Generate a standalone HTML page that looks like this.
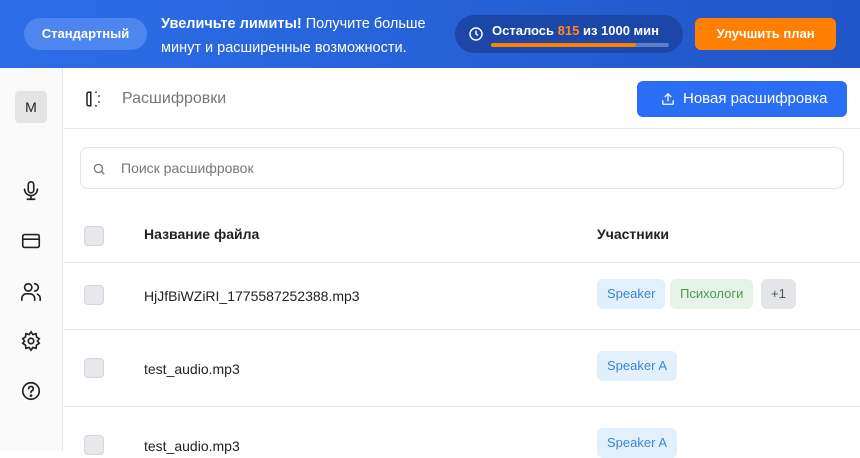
<!DOCTYPE html>
<html><head><meta charset="utf-8"><style>
*{box-sizing:border-box;margin:0;padding:0}
body{width:860px;height:451px;overflow:hidden;font-family:"Liberation Sans",sans-serif;background:#fff;position:relative;color:#222}
.banner{position:absolute;left:0;top:0;width:860px;height:68px;background:linear-gradient(90deg,#2c6ee8,#2056c8)}
.pill{position:absolute;left:24px;top:18px;width:123px;height:32px;border-radius:16px;background:#4d86ef;color:#fff;font-weight:bold;font-size:13px;text-align:center;line-height:32px}
.btxt{position:absolute;left:161px;top:12px;color:#fff;font-size:14.5px;line-height:24px}
.usage{position:absolute;left:455px;top:15px;width:228px;height:38px;border-radius:19px;background:#1c47a8}
.usage .t{position:absolute;left:37px;top:8px;color:#fff;font-size:13px;font-weight:bold}
.bar{position:absolute;left:36px;top:28px;width:178px;height:4px;border-radius:2px;background:#5d7fc4}
.bar i{display:block;width:145px;height:4px;border-radius:2px;background:#ff7f00}
.up{position:absolute;left:695px;top:18px;width:141px;height:32px;border-radius:6px;background:#ff7f00;color:#fff;font-weight:bold;font-size:13px;text-align:center;line-height:32px}
.side{position:absolute;left:0;top:68px;width:63px;height:383px;background:#fafafa;border-right:1px solid #e5e5e5}
.av{position:absolute;left:15px;top:91px;width:32px;height:32px;border-radius:4px;background:#e4e4e4;font-size:14px;text-align:center;line-height:32px;color:#222}
.ic{position:absolute;left:20px;width:22px;height:22px}
.hdr{position:absolute;left:64px;top:68px;width:796px;height:61px;border-bottom:1px solid #e8e8e8}
.new{position:absolute;left:637px;top:81px;width:210px;height:36px;border-radius:6px;background:#2a6ef5;color:#fff;font-size:15px;line-height:36px}
.search{position:absolute;left:80px;top:147px;width:764px;height:42px;border:1px solid #e5e5e5;border-radius:8px;font-size:14px;color:#777;line-height:40px;padding-left:40px}
.cb{position:absolute;left:84px;width:20px;height:20px;border-radius:4px;background:#e6e8ec;border:1.5px solid #d4d6da}
.line{position:absolute;left:64px;width:796px;height:1px;background:#e8e8e8}
.tx{position:absolute;font-size:14px}
.tag{position:absolute;height:30px;border-radius:6px;font-size:13px;line-height:30px;padding:0 10px}
.b{background:#e2f0fc;color:#3a86d8}.g{background:#e6f4e8;color:#4a9a55}.gr{background:#e4e5e8;color:#555}
</style></head><body>
<div class="banner">
<div class="pill">Стандартный</div>
<div class="btxt"><b>Увеличьте лимиты!</b> Получите больше<br>минут и расширенные возможности.</div>
<div class="usage">
<svg style="position:absolute;left:13px;top:11px" width="16" height="16" viewBox="0 0 24 24" fill="none" stroke="#fff" stroke-width="2.2"><circle cx="12" cy="12" r="9"/><path d="M12 7v5l3 2"/></svg>
<div class="t">Осталось <span style="color:#ff8a1a">815</span> из 1000 мин</div>
<div class="bar"><i></i></div></div>
<div class="up">Улучшить план</div>
</div>
<div class="side">
<div class="av" style="top:23px">M</div>
<svg class="ic" style="top:112px" viewBox="0 0 24 24" fill="none" stroke="#222" stroke-width="1.8" stroke-linecap="round"><rect x="9" y="2" width="6" height="12" rx="3"/><path d="M5 10a7 7 0 0 0 14 0M12 17v4M8 21h8"/></svg>
<svg class="ic" style="top:162px" viewBox="0 0 24 24" fill="none" stroke="#222" stroke-width="1.8"><rect x="3" y="5" width="18" height="14" rx="2"/><path d="M3 10h18"/></svg>
<svg class="ic" style="top:213px" viewBox="0 0 24 24" fill="none" stroke="#222" stroke-width="1.8" stroke-linecap="round"><circle cx="9" cy="7" r="4"/><path d="M2 21v-2a5 5 0 0 1 5-5h4a5 5 0 0 1 5 5v2M16 3a4 4 0 0 1 0 8M22 21v-2a5 5 0 0 0-3-4.5"/></svg>
<svg class="ic" style="top:262px" viewBox="0 0 24 24" fill="none" stroke="#222" stroke-width="1.8"><circle cx="12" cy="12" r="3"/><path d="M12 2l2 3 3.5-1 .5 3.5 3 2-2 2.5 2 2.5-3 2-.5 3.5-3.5-1-2 3-2-3-3.5 1-.5-3.5-3-2 2-2.5-2-2.5 3-2 .5-3.5 3.5 1z"/></svg>
<svg class="ic" style="top:312px" viewBox="0 0 24 24" fill="none" stroke="#222" stroke-width="1.8" stroke-linecap="round"><circle cx="12" cy="12" r="9"/><path d="M9.5 9.5a2.5 2.5 0 1 1 3.5 2.3c-.7.3-1 .9-1 1.7"/><circle cx="12" cy="17" r=".6" fill="#222"/></svg>
</div>
<div class="hdr">
<svg style="position:absolute;left:20px;top:22px" width="18" height="18" viewBox="0 0 24 24" fill="none" stroke="#222" stroke-width="2"><path d="M9 3H6a2 2 0 0 0-2 2v14a2 2 0 0 0 2 2h3zM9 3v18M15 3h2M15 21h2M20 7v2M20 15v2"/></svg>
<div style="position:absolute;left:58px;top:22px;font-size:16px;color:#777">Расшифровки</div>
</div>
<div class="new"><svg style="position:absolute;left:24px;top:11px" width="14" height="14" viewBox="0 0 24 24" fill="none" stroke="#fff" stroke-width="2.2" stroke-linecap="round"><path d="M12 15V3M7 8l5-5 5 5M3 15v4a2 2 0 0 0 2 2h14a2 2 0 0 0 2-2v-4"/></svg><span style="position:absolute;left:46px">Новая расшифровка</span></div>
<div class="search"><svg style="position:absolute;left:11px;top:14px" width="14" height="14" viewBox="0 0 24 24" fill="none" stroke="#777" stroke-width="2.2"><circle cx="11" cy="11" r="7"/><path d="M16 16l5 5"/></svg>Поиск расшифровок</div>
<div class="cb" style="top:226px"></div>
<div class="tx" style="left:144px;top:226px;font-weight:bold">Название файла</div>
<div class="tx" style="left:597px;top:226px;font-weight:bold">Участники</div>
<div class="line" style="top:262px"></div>
<div class="cb" style="top:285px"></div>
<div class="tx" style="left:144px;top:288px">HjJfBiWZiRI_1775587252388.mp3</div>
<div class="tag b" style="left:597px;top:279px">Speaker</div>
<div class="tag g" style="left:670px;top:279px">Психологи</div>
<div class="tag gr" style="left:761px;top:279px">+1</div>
<div class="line" style="top:329px"></div>
<div class="cb" style="top:358px"></div>
<div class="tx" style="left:144px;top:361px">test_audio.mp3</div>
<div class="tag b" style="left:597px;top:351px">Speaker A</div>
<div class="line" style="top:406px"></div>
<div class="cb" style="top:435px"></div>
<div class="tx" style="left:144px;top:438px">test_audio.mp3</div>
<div class="tag b" style="left:597px;top:428px">Speaker A</div>
</body></html>
